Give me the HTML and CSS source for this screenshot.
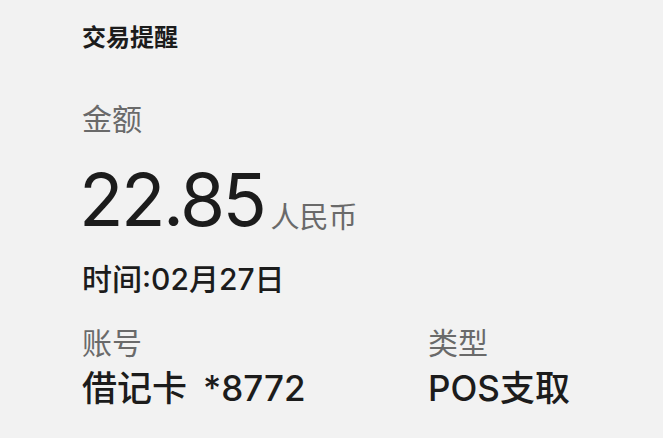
FILE: index.html
```html
<!DOCTYPE html>
<html lang="zh-CN">
<head>
<meta charset="utf-8">
<link rel="stylesheet" href="styles.css">
</head>
<body>
<main class="card">
  <h1 class="title">交易提醒</h1>
  <div class="label amount-label">金额</div>
  <div class="amount-row">
    <span class="amount">22.85</span><span class="currency">人民币</span>
  </div>
  <div class="time">时间:02月27日</div>
  <div class="details">
    <div class="detail">
      <div class="label">账号</div>
      <div class="value">借记卡<span class="card-no">*8772</span></div>
    </div>
    <div class="detail">
      <div class="label">类型</div>
      <div class="value">POS支取</div>
    </div>
  </div>
</main>
</body>
</html>
```
FILE: styles.css
```css
* { box-sizing: border-box; margin: 0; padding: 0; }
html, body { background: #f2f2f2; }
body {
  width: 663px;
  height: 438px;
  overflow: hidden;
  font-family: Inter, "Noto Sans CJK SC", sans-serif;
  color: #1c1c1c;
}
.card {
  padding: 23px 0 0 82px;
  display: flex;
  flex-direction: column;
}
.title {
  font-size: 24px;
  font-weight: 600;
  line-height: 30px;
}
.label {
  font-size: 30px;
  line-height: 36px;
  color: #6a6a6a;
  font-weight: 400;
}
.amount-label {
  margin-top: 48px;
}
.amount-row {
  display: flex;
  align-items: baseline;
  margin-top: 23px;
  margin-left: -3px;
  line-height: 80px;
}
.amount {
  font-size: 73px;
  font-weight: 400;
  letter-spacing: -2.5px;
}
.currency {
  font-size: 29px;
  color: #6a6a6a;
  margin-left: 6px;
  position: relative;
  top: 2px;
}
.time {
  font-size: 30px;
  font-weight: 500;
  line-height: 36px;
  margin-top: 5px;
}
.details {
  display: grid;
  grid-template-columns: 346px auto;
  margin-top: 28px;
}
.value {
  font-size: 35px;
  line-height: 44px;
  font-weight: 500;
  margin-top: 5px;
}
.card-no {
  margin-left: 16px;
}
```
